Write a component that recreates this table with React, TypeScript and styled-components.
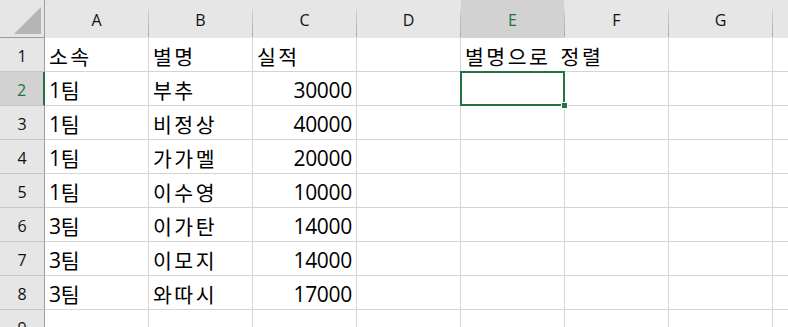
import styled, { createGlobalStyle } from "styled-components";

const Global = createGlobalStyle`
  html, body {
    margin: 0;
    padding: 0;
    background: #ffffff;
    overflow: hidden;
  }
`;

const Sheet = styled.div`
  display: grid;
  grid-template-columns: 45px repeat(8, 104px);
  grid-template-rows: 38px repeat(9, 34px);
  width: 788px;
  height: 327px;
  overflow: hidden;
  font-family: "Noto Sans CJK KR", "Noto Sans", sans-serif;
  color: #000;
`;

const Corner = styled.div`
  position: relative;
  background: #e6e6e6;
  border-bottom: 1px solid #9c9c9c;
  border-right: 1px solid #9c9c9c;
  box-sizing: border-box;
`;

const CornerTriangle = styled.svg`
  position: absolute;
  right: 3px;
  bottom: 3px;
`;

const ColHead = styled.div<{ $active?: boolean }>`
  display: flex;
  align-items: center;
  justify-content: center;
  box-sizing: border-box;
  padding-top: 3px;
  background: ${(p) => (p.$active ? "#d2d2d2" : "#e6e6e6")};
  border-bottom: ${(p) => (p.$active ? "2px solid #217346" : "1px solid #9c9c9c")};
  border-right: 1px solid;
  border-image: linear-gradient(to bottom, #e6e6e6 0%, #e6e6e6 12%, #c8c8c8 40%, #a8a8a8 100%) 0 1 0 0;
  font-family: "Open Sans", "Noto Sans", sans-serif;
  font-size: 16px;
  color: ${(p) => (p.$active ? "#217346" : "#111")};
`;

const RowHead = styled.div<{ $active?: boolean }>`
  display: flex;
  align-items: center;
  justify-content: center;
  box-sizing: border-box;
  padding-top: 2px;
  background: ${(p) => (p.$active ? "#d2d2d2" : "#e6e6e6")};
  border-bottom: 1px solid #c6c6c6;
  border-right: ${(p) => (p.$active ? "2px solid #217346" : "1px solid #9c9c9c")};
  font-family: "Open Sans", "Noto Sans", sans-serif;
  font-size: 16px;
  color: ${(p) => (p.$active ? "#217346" : "#111")};
`;

const Cell = styled.div<{ $num?: boolean; $span?: number }>`
  display: flex;
  align-items: center;
  justify-content: ${(p) => (p.$num ? "flex-end" : "flex-start")};
  box-sizing: border-box;
  padding: 2px 4px 0 4px;
  border-right: 1px solid #d4d4d4;
  border-bottom: 1px solid #d4d4d4;
  white-space: nowrap;
  grid-column: ${(p) => (p.$span ? `span ${p.$span}` : "auto")};
  font-family: "Noto Sans CJK KR", "Noto Sans", sans-serif;
  font-size: 20.5px;
  letter-spacing: 2.5px;
  word-spacing: 3px;
`;

const Digits = styled.span`
  font-family: "Open Sans", "Noto Sans", sans-serif;
  font-size: 21px;
  letter-spacing: -0.3px;
`;

const Selected = styled.div`
  position: relative;
  box-sizing: border-box;
  border-right: 1px solid #d4d4d4;
  border-bottom: 1px solid #d4d4d4;
  &::before {
    content: "";
    position: absolute;
    left: -1px;
    top: -1px;
    right: -1px;
    bottom: -1px;
    border: 2px solid #217346;
  }
  &::after {
    content: "";
    position: absolute;
    right: -4px;
    bottom: -4px;
    width: 7px;
    height: 7px;
    background: #217346;
    border: 1px solid #fff;
    box-sizing: border-box;
  }
`;

const columns = ["A", "B", "C", "D", "E", "F", "G", "H"];

const data: [string, string, string][] = [
  ["1", "부추", "30000"],
  ["1", "비정상", "40000"],
  ["1", "가가멜", "20000"],
  ["1", "이수영", "10000"],
  ["3", "이가탄", "14000"],
  ["3", "이모지", "14000"],
  ["3", "와따시", "17000"],
];

export default function App() {
  return (
    <>
      <Global />
      <Sheet>
        <Corner>
          <CornerTriangle width="27" height="27" viewBox="0 0 27 27">
            <polygon points="27,0 27,27 0,27" fill="#b4b4b4" />
          </CornerTriangle>
        </Corner>
        {columns.map((c) => (
          <ColHead key={c} $active={c === "E"}>
            {c}
          </ColHead>
        ))}

        <RowHead>1</RowHead>
        <Cell>소속</Cell>
        <Cell>별명</Cell>
        <Cell>실적</Cell>
        <Cell />
        <Cell $span={2}>별명으로 정렬</Cell>
        <Cell />
        <Cell />

        {data.map((row, i) => (
          <RowRender key={i} index={i + 2} row={row} />
        ))}

        <RowHead>9</RowHead>
        {columns.map((c) => (
          <Cell key={c} />
        ))}
      </Sheet>
    </>
  );
}

function RowRender({ index, row }: { index: number; row: [string, string, string] }) {
  return (
    <>
      <RowHead $active={index === 2}>{index}</RowHead>
      <Cell>
        <Digits>{row[0]}</Digits>팀
      </Cell>
      <Cell>{row[1]}</Cell>
      <Cell $num>
        <Digits>{row[2]}</Digits>
      </Cell>
      <Cell />
      {index === 2 ? <Selected /> : <Cell />}
      <Cell />
      <Cell />
      <Cell />
    </>
  );
}
